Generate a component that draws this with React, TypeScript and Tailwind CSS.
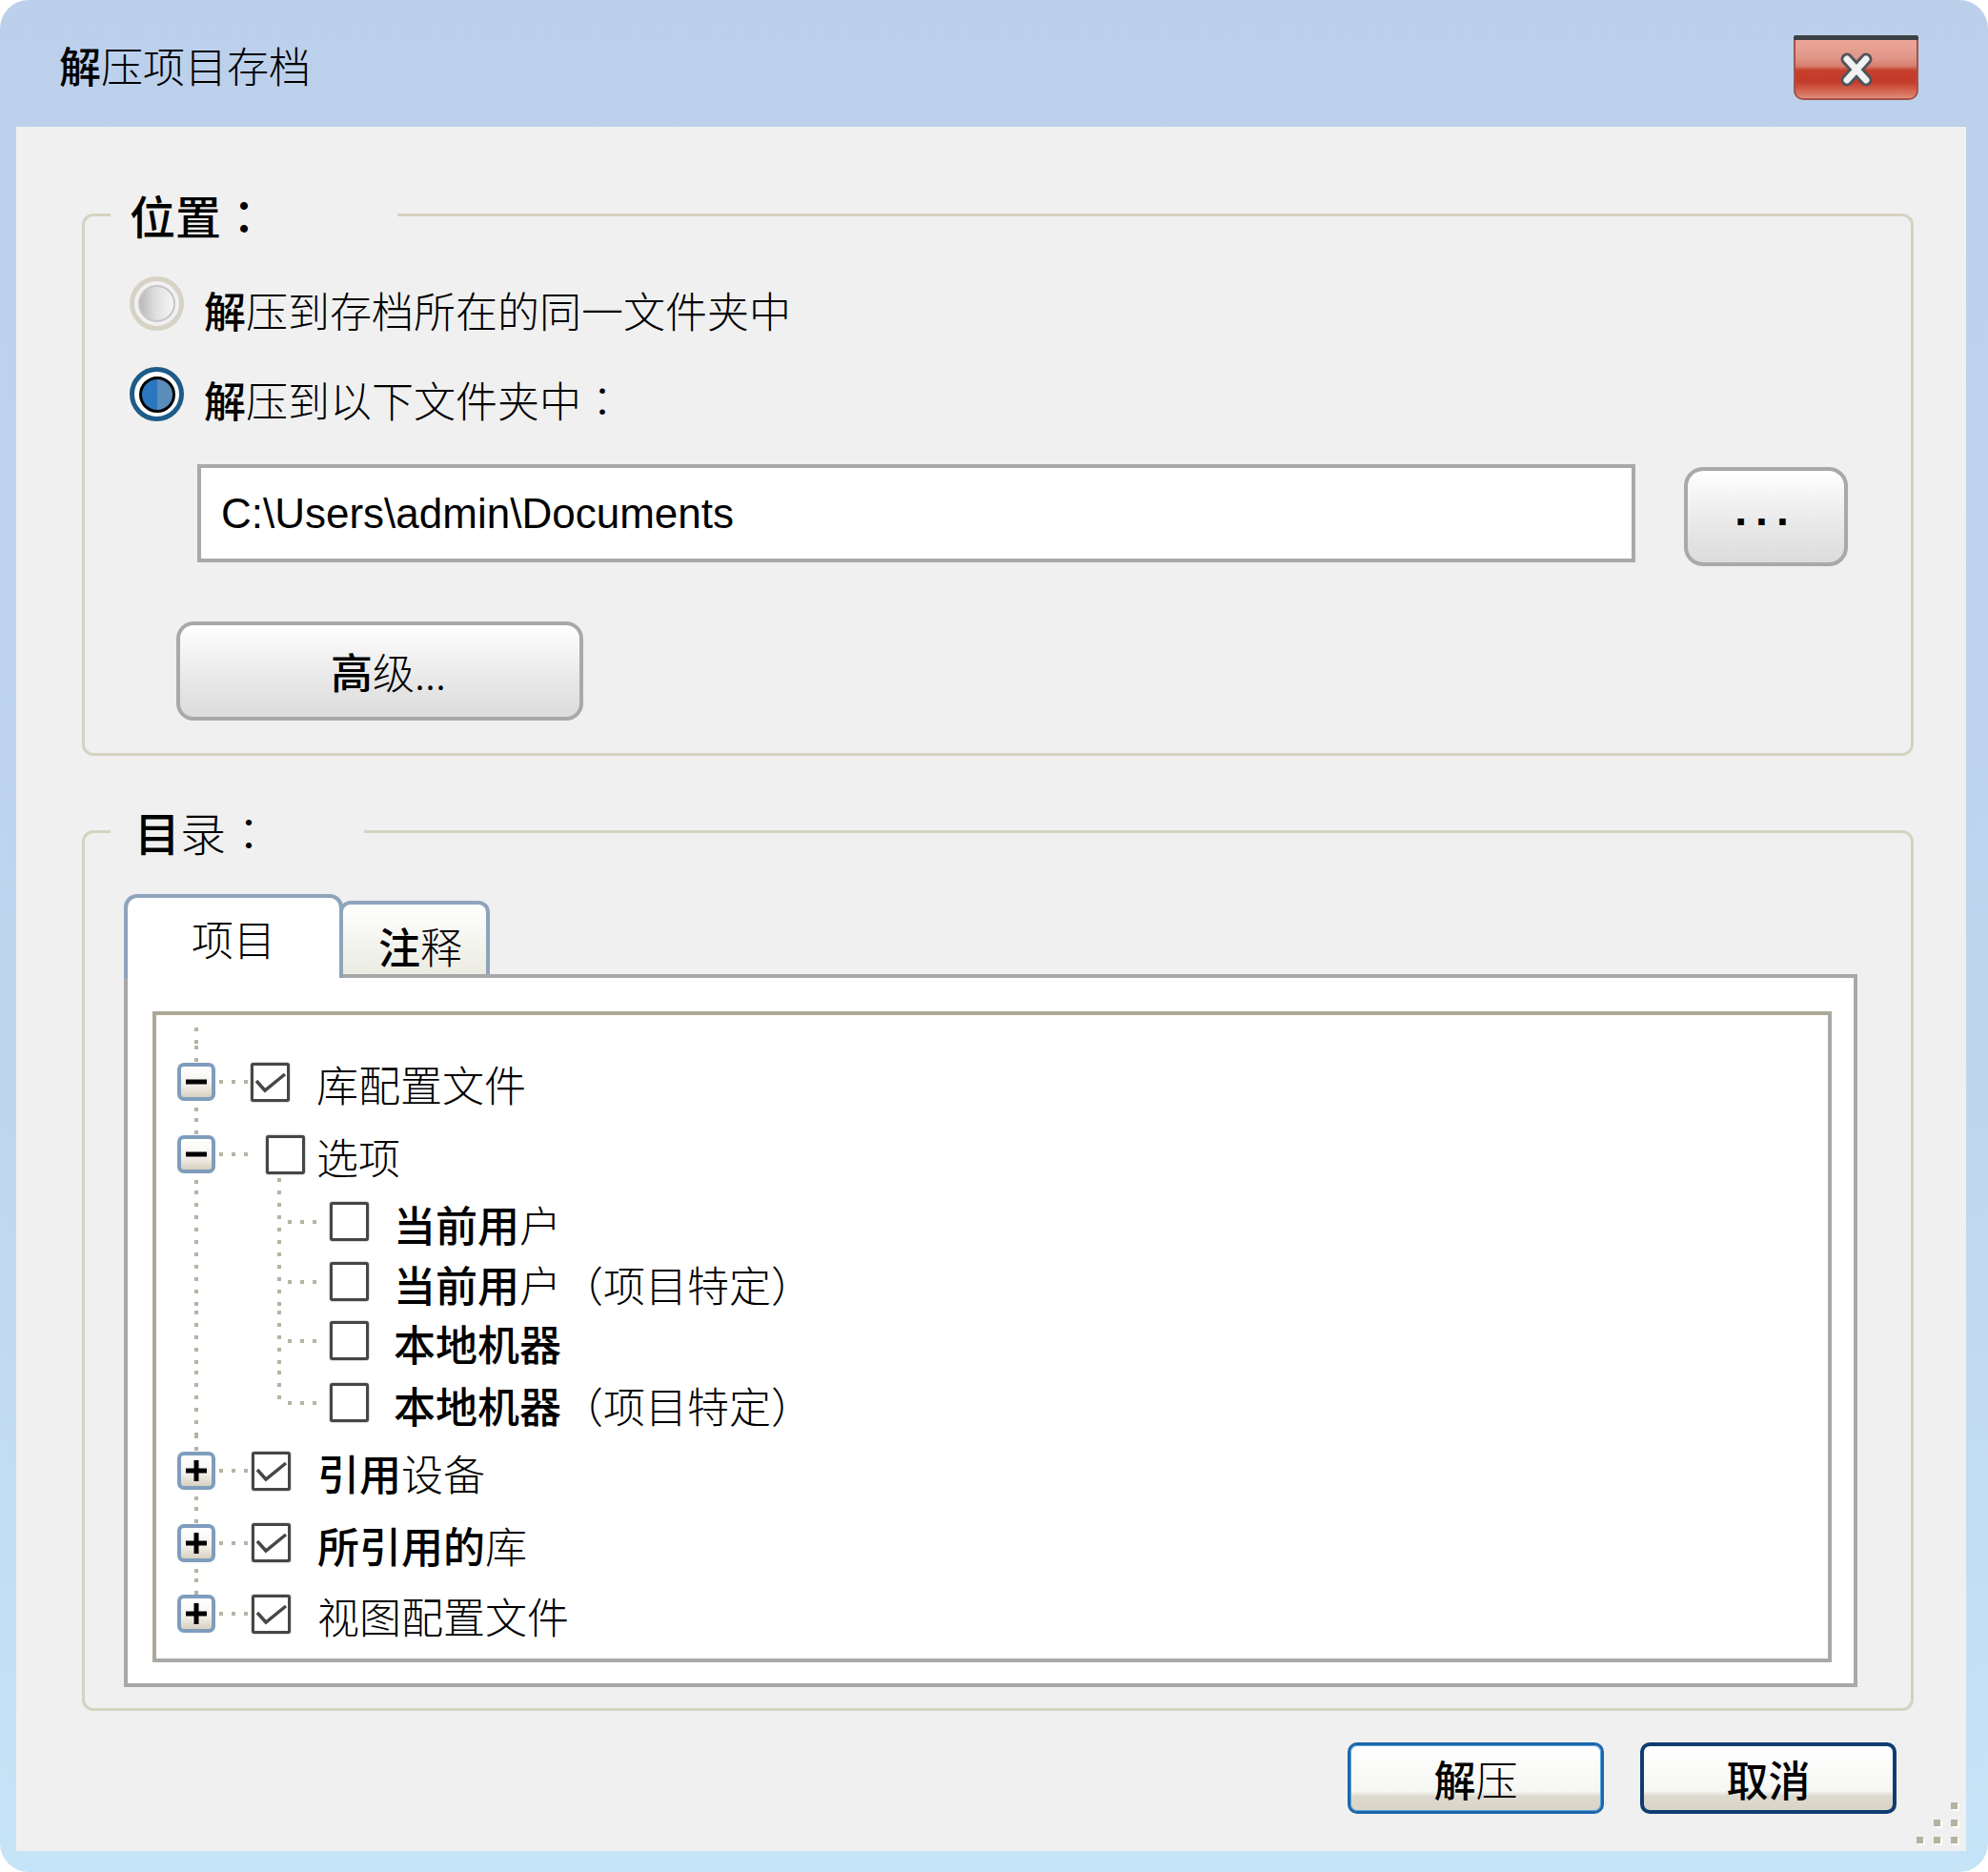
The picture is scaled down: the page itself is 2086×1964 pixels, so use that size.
import type { ReactNode } from "react";

const vdots =
  "bg-[repeating-linear-gradient(to_bottom,#b6b3a4_0px,#b6b3a4_4px,transparent_4px,transparent_13px)] bg-no-repeat";

function B({ children }: { children: ReactNode }) {
  return <span className="font-medium">{children}</span>;
}

function T({ children }: { children: ReactNode }) {
  return <span className="font-light">{children}</span>;
}

// centred full-width colon, as in the dialog
function Colon({ bold }: { bold?: boolean }) {
  return (
    <span
      className={`font-['Noto_Sans_CJK_JP',sans-serif] ${
        bold ? "font-medium" : "font-light"
      }`}
    >
      ：
    </span>
  );
}

function Dots({ className = "" }: { className?: string }) {
  return (
    <div className={`flex gap-[9px] ${className}`}>
      {[0, 1, 2].map((i) => (
        <span key={i} className="h-[4px] w-[4px] bg-[#b6b3a4]" />
      ))}
    </div>
  );
}

function Expander({ open }: { open: boolean }) {
  return (
    <div className="flex h-[40px] w-[40px] items-center justify-center rounded-[7px] border-[4px] border-[#7f9dbd] bg-[linear-gradient(to_bottom,#ffffff,#f5f3ee_55%,#d8d1c0)]">
      <svg width="24" height="24" viewBox="0 0 24 24">
        <rect x="1" y="9.5" width="22" height="5" fill="#000" />
        {!open && <rect x="9.5" y="1" width="5" height="22" fill="#000" />}
      </svg>
    </div>
  );
}

function Check({ on }: { on: boolean }) {
  return (
    <div className="flex h-[41px] w-[41px] items-center justify-center rounded-[3px] border-[3px] border-[#464646] bg-white shadow-[0_0_1.5px_#555]">
      {on && (
        <svg width="35" height="35" viewBox="0 0 35 35">
          <path
            d="M3 16 L12 26 L33 9"
            fill="none"
            stroke="#474747"
            strokeWidth="3.5"
          />
        </svg>
      )}
    </div>
  );
}

function TopRow({
  h,
  open,
  checked,
  boxMl,
  textMl,
  last,
  stub,
  children,
}: {
  h: string;
  open: boolean;
  checked: boolean;
  boxMl: string;
  textMl: string;
  last?: boolean;
  stub?: boolean;
  children: ReactNode;
}) {
  return (
    <div className={`flex ${h} items-center`}>
      <div
        className={`ml-[22px] flex w-[40px] items-center justify-center self-stretch ${vdots} bg-[position:18px_0] ${
          last ? "bg-[length:4px_50%]" : "bg-[length:4px_100%]"
        }`}
      >
        <Expander open={open} />
      </div>
      <Dots className="ml-[4px]" />
      <div
        className={`flex items-center self-stretch ${boxMl} ${
          stub ? `${vdots} bg-[position:12px_100%] bg-[length:4px_13px]` : ""
        }`}
      >
        <Check on={checked} />
      </div>
      <span className={`${textMl} pt-[4px] text-[44px] leading-none`}>
        {children}
      </span>
    </div>
  );
}

function SubRow({
  h,
  last,
  children,
}: {
  h: string;
  last?: boolean;
  children: ReactNode;
}) {
  return (
    <div className={`flex ${h} items-center`}>
      <div
        className={`ml-[22px] w-[40px] self-stretch ${vdots} bg-[position:18px_0] bg-[length:4px_100%]`}
      />
      <div
        className={`ml-[65px] w-[4px] self-stretch ${vdots} ${
          last ? "bg-[length:4px_50%]" : "bg-[length:4px_100%]"
        }`}
      />
      <Dots className="ml-[7px]" />
      <div className="ml-[14px]">
        <Check on={false} />
      </div>
      <span className="ml-[26px] pt-[4px] text-[44px] leading-none">
        {children}
      </span>
    </div>
  );
}

function RadioOff() {
  return (
    <div className="flex h-[57px] w-[57px] shrink-0 items-center justify-center rounded-full border-[5px] border-[#d6d3c5] bg-[#f1f1f1]">
      <div className="h-[39px] w-[39px] rounded-full border-[2px] border-[#c6c6c6] bg-[linear-gradient(to_right,#b9b9b9,#dedede_45%,#f6f6f6)]" />
    </div>
  );
}

function RadioOn() {
  return (
    <div className="flex h-[57px] w-[57px] shrink-0 items-center justify-center rounded-full border-[5px] border-[#1e5b88] bg-white">
      <div className="h-[38px] w-[38px] rounded-full border-[3px] border-black bg-[linear-gradient(to_right,#2a77bf_50%,#5b8dbb_50%)]" />
    </div>
  );
}

function CloseButton() {
  return (
    <div className="ml-auto mr-[73px] mt-[37px] flex h-[68px] w-[131px] flex-col">
      <div className="h-[5px] w-full rounded-t-[2px] bg-[#3d4146]" />
      <div className="flex flex-1 items-center justify-center rounded-b-[10px] border-x-[2px] border-b-[2px] border-[#a2544a] bg-[linear-gradient(to_bottom,#eba698,#e1978a_30%,#d67e6e_45%,#c8402c_52%,#c33b29_72%,#d46753_88%,#e28b7a)]">
        <svg width="44" height="40" viewBox="0 0 44 40">
          <path
            d="M12 9 L32 31 M32 9 L12 31"
            stroke="#50555b"
            strokeWidth="13"
            strokeLinecap="round"
          />
          <path
            d="M12 9 L32 31 M32 9 L12 31"
            stroke="#f2f2f2"
            strokeWidth="7"
            strokeLinecap="round"
          />
        </svg>
      </div>
    </div>
  );
}

function Grip() {
  const cells = [false, false, true, false, true, true, true, true, true];
  return (
    <div className="ml-[21px] mt-[96px] grid grid-cols-3 gap-[11px]">
      {cells.map((on, i) => (
        <span
          key={i}
          className={
            on
              ? "h-[7px] w-[7px] bg-[#b4b2a0] shadow-[2px_2px_0_#ffffff]"
              : "h-[7px] w-[7px]"
          }
        />
      ))}
    </div>
  );
}

export default function App() {
  return (
    <div className="h-[1964px] w-[2086px] bg-white font-['Noto_Sans_CJK_SC',sans-serif] text-black">
      <div className="flex h-full w-full flex-col rounded-[30px] bg-[linear-gradient(to_bottom,#bcd0ec,#bfd6ef_60%,#c6e4f7)]">
        {/* title bar */}
        <div className="flex h-[133px] shrink-0 items-start">
          <div className="ml-[62px] mt-[40px] text-[44px] leading-[56px]">
            <B>解</B>
            <T>压项目存档</T>
          </div>
          <CloseButton />
        </div>

        {/* client area */}
        <div className="ml-[17px] flex h-[1809px] w-[2046px] flex-col bg-[#f0f0f0]">
          <fieldset className="ml-[69px] mt-[68px] w-[1922px] rounded-[12px] border-[3px] border-[#d5d3c1] pb-[34px]">
            <legend className="ml-[27px] pl-[20px] pr-[137px] text-[48px] leading-[48px]">
              <B>位置</B>
              <Colon bold />
            </legend>

            <div className="mt-[41px] flex items-center pl-[47px]">
              <RadioOff />
              <span className="ml-[21px] pt-[12px] text-[44px] leading-none">
                <B>解</B>
                <T>压到存档所在的同一文件夹中</T>
              </span>
            </div>

            <div className="mt-[38px] flex items-center pl-[47px]">
              <RadioOn />
              <span className="ml-[21px] pt-[10px] text-[44px] leading-none">
                <B>解</B>
                <T>压到以下文件夹中</T>
                <Colon />
              </span>
            </div>

            <div className="mt-[45px] flex items-start">
              <div className="ml-[118px] flex h-[103px] w-[1509px] items-center border-[4px] border-[#a9a9a9] bg-white pl-[21px] font-['Liberation_Sans',sans-serif] text-[44px]">
                {"C:\\Users\\admin\\Documents"}
              </div>
              <button className="ml-[51px] mt-[3px] flex h-[104px] w-[172px] items-center justify-center rounded-[20px] border-[4px] border-[#a9a9a9] bg-[linear-gradient(to_bottom,#ffffff,#f5f5f5_25%,#e8e8e8_60%,#dcdcdc)] pb-[14px] font-['Liberation_Sans',sans-serif] text-[46px] font-bold tracking-[9px]">
                ...
              </button>
            </div>

            <button className="ml-[96px] mt-[58px] flex h-[104px] w-[427px] items-center justify-center rounded-[18px] border-[4px] border-[#a9a9a9] bg-[linear-gradient(to_bottom,#ffffff,#f5f5f5_25%,#e8e8e8_60%,#dcdcdc)] pl-[18px] text-[44px] leading-none">
              <B>高</B>
              <T>级...</T>
            </button>
          </fieldset>

          <fieldset className="ml-[69px] mt-[55px] w-[1922px] rounded-[12px] border-[3px] border-[#d5d3c1] pb-[22px]">
            <legend className="ml-[27px] pl-[25px] pr-[97px] text-[48px] leading-[48px]">
              <B>目</B>
              <T>录</T>
              <Colon />
            </legend>

            <div className="ml-[41px] mt-[42px] flex items-end">
              <div className="relative z-10 -mb-[4px] flex h-[88px] w-[230px] items-center justify-center rounded-t-[14px] border-[4px] border-b-0 border-[#8ea4bc] bg-white text-[44px] leading-none">
                <T>项目</T>
              </div>
              <div className="-ml-[4px] flex h-[77px] w-[158px] items-center justify-center rounded-t-[12px] border-[4px] border-b-0 border-[#8ea4bc] bg-[linear-gradient(to_bottom,#ffffff,#f7f7f3_40%,#ebebe3)] pl-[12px] pt-[12px] text-[44px] leading-none">
                <B>注</B>
                <T>释</T>
              </div>
            </div>

            <div className="ml-[41px] h-[748px] w-[1819px] border-[4px] border-[#a8a8a8] bg-white pl-[26px] pt-[35px]">
              <div className="flex h-[683px] w-[1762px] flex-col border-[4px] border-b-[#a9a9a9] border-l-[#aca895] border-r-[#a9a9a9] border-t-[#aca895] bg-white">
                <div className="h-[32px] shrink-0">
                  <div
                    className={`ml-[40px] mt-[13px] h-[19px] w-[4px] ${vdots} bg-[length:4px_100%]`}
                  />
                </div>
                <TopRow h="h-[76px]" open checked boxMl="ml-[3px]" textMl="ml-[28px]">
                  <T>库配置文件</T>
                </TopRow>
                <TopRow
                  h="h-[76px]"
                  open
                  checked={false}
                  boxMl="ml-[19px]"
                  textMl="ml-[12px]"
                  stub
                >
                  <T>选项</T>
                </TopRow>
                <SubRow h="h-[65px]">
                  <B>当前用</B>
                  <T>户</T>
                </SubRow>
                <SubRow h="h-[61px]">
                  <B>当前用</B>
                  <T>户（项目特定）</T>
                </SubRow>
                <SubRow h="h-[63px]">
                  <B>本地机器</B>
                </SubRow>
                <SubRow h="h-[67px]" last>
                  <B>本地机器</B>
                  <T>（项目特定）</T>
                </SubRow>
                <TopRow h="h-[76px]" open={false} checked boxMl="ml-[4px]" textMl="ml-[28px]">
                  <B>引用</B>
                  <T>设备</T>
                </TopRow>
                <TopRow h="h-[75px]" open={false} checked boxMl="ml-[4px]" textMl="ml-[28px]">
                  <B>所引用的</B>
                  <T>库</T>
                </TopRow>
                <TopRow
                  h="h-[74px]"
                  open={false}
                  checked
                  boxMl="ml-[4px]"
                  textMl="ml-[28px]"
                  last
                >
                  <T>视图配置文件</T>
                </TopRow>
              </div>
            </div>
          </fieldset>

          <div className="flex items-start justify-end pr-[9px]">
            <button className="mt-[33px] flex h-[75px] w-[269px] items-center justify-center rounded-[10px] border-[3px] border-[#1b67aa] bg-[linear-gradient(to_bottom,#ffffff,#f6f6f3_70%,#ddd9ce_78%,#d8d4c8)] text-[44px] leading-none shadow-[inset_0_0_0_1px_#5aa2dc]">
              <B>解</B>
              <T>压</T>
            </button>
            <button className="ml-[38px] mt-[33px] flex h-[75px] w-[269px] items-center justify-center rounded-[10px] border-[4px] border-[#0f3d72] bg-[linear-gradient(to_bottom,#ffffff,#f6f6f3_70%,#ddd9ce_78%,#d8d4c8)] text-[44px] leading-none">
              <B>取消</B>
            </button>
            <Grip />
          </div>
        </div>
      </div>
    </div>
  );
}
